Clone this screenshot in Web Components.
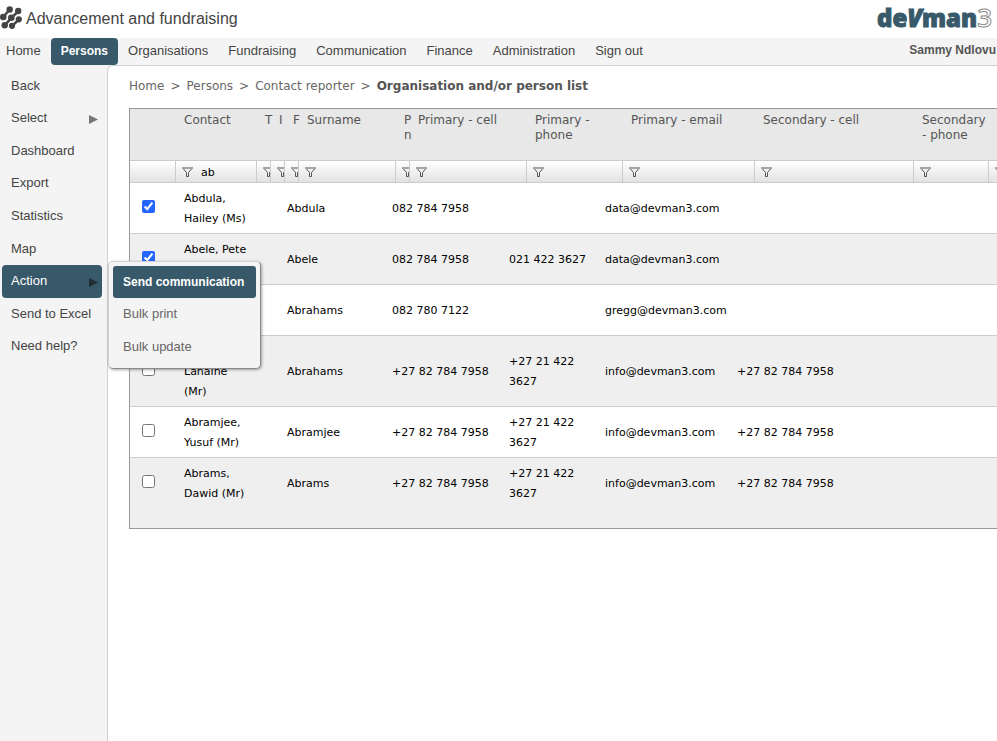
<!DOCTYPE html>
<html lang="en">
<head>
<meta charset="utf-8">
<title>Advancement and fundraising</title>
<style>
  body {
    margin: 0; min-height: 100vh; overflow: hidden;
    display: flex; flex-direction: column;
    font: 13px/16px "Liberation Sans", Arial, sans-serif;
    color: #444; background: #fff;
    --brand: #38596a; --panel: #f4f4f4; --line: #d0d0d0;
    --table-font: "DejaVu Sans", Verdana, sans-serif;
  }
  main-layout { flex: 1; }
</style>
</head>
<body>
<dm-banner>Advancement and fundraising</dm-banner>
<dm-nav>
  <dm-nav-item>Home</dm-nav-item>
  <dm-nav-item current>Persons</dm-nav-item>
  <dm-nav-item>Organisations</dm-nav-item>
  <dm-nav-item>Fundraising</dm-nav-item>
  <dm-nav-item>Communication</dm-nav-item>
  <dm-nav-item>Finance</dm-nav-item>
  <dm-nav-item>Administration</dm-nav-item>
  <dm-nav-item>Sign out</dm-nav-item>
  <span slot="user">Sammy Ndlovu</span>
</dm-nav>
<main-layout>
  <dm-menu slot="side">
    <dm-menu-item>Back</dm-menu-item>
    <dm-menu-item more>Select</dm-menu-item>
    <dm-menu-item>Dashboard</dm-menu-item>
    <dm-menu-item>Export</dm-menu-item>
    <dm-menu-item>Statistics</dm-menu-item>
    <dm-menu-item>Map</dm-menu-item>
    <dm-menu-item more current>Action
      <dm-popup slot="popup">
        <dm-popup-item current>Send communication</dm-popup-item>
        <dm-popup-item>Bulk print</dm-popup-item>
        <dm-popup-item>Bulk update</dm-popup-item>
      </dm-popup>
    </dm-menu-item>
    <dm-menu-item>Send to Excel</dm-menu-item>
    <dm-menu-item>Need help?</dm-menu-item>
  </dm-menu>
  <dm-breadcrumb></dm-breadcrumb>
  <dm-grid></dm-grid>
</main-layout>

<script>
const define = (name, html, setup) => customElements.define(name, class extends HTMLElement {
  constructor() {
    super();
    this.attachShadow({ mode: 'open' }).innerHTML = html;
  }
  connectedCallback() { if (setup) setup(this, this.shadowRoot); }
});

define('dm-banner', `
  <style>
    :host { display: flex; justify-content: space-between; align-items: center; height: 38px; overflow: hidden; }
    h1 { display: flex; align-items: center; gap: 4px; margin: 0; font: 16px/20px "Liberation Sans", Arial, sans-serif; }
    svg { display: block; margin-bottom: 2px; }
    a { padding: 0 5px 3px 0; color: var(--brand); text-decoration: none; font: 800 24px/32px "Open Sans", sans-serif; -webkit-text-stroke: 1px var(--brand); }
    i { font-style: italic; }
    .three { color: #fff; font-size: 26px; font-weight: 600; -webkit-text-stroke: 1px #8b8b8b; }
  </style>
  <h1>
    <svg width="22" height="24" viewBox="0 1 22 24" aria-hidden="true" fill="#444" stroke="#444">
      <path d="M9.700 4.500 3.200 12M18.200 6.300 11.300 12.800 4.700 20.300M19 14.300 12 21.200" fill="none" stroke-width="2.500"/>
      <g stroke="none"><circle cx="9.700" cy="4.500" r="3.200"/><circle cx="3.300" cy="12" r="3.300"/>
      <circle cx="18.200" cy="6" r="3.200"/><circle cx="11.300" cy="12.800" r="3.300"/><circle cx="4.700" cy="20.300" r="3.200"/>
      <circle cx="18.800" cy="14.300" r="3.100"/><circle cx="12" cy="20.800" r="3.100"/></g>
    </svg>
    <slot></slot>
  </h1>
  <a href="#" aria-label="devman3">de<i>V</i>man<span class="three">3</span></a>`);

define('dm-nav', `
  <style>
    :host { display: flex; justify-content: space-between; background: var(--panel); height: 28px; }
    nav { display: flex; gap: 2px; margin-left: -3px; }
    ::slotted([slot=user]) { font: bold 12px/24px "Liberation Sans", Arial, sans-serif; color: #555; white-space: nowrap; padding-right: 1px; }
  </style>
  <nav><slot></slot></nav><slot name="user"></slot>`);

define('dm-nav-item', `
  <style>
    :host { display: block; }
    :host([current]) { margin: 0 -1px; }
    a { display: block; padding: 0 9px; line-height: 26px; height: 27px; color: #444; text-decoration: none; white-space: nowrap; border-radius: 4px; }
    :host([current]) a { padding: 0 10px; background: var(--brand); color: #fff; font-weight: bold; font-size: 12px; }
  </style>
  <a href="#"><slot></slot></a>`);

define('main-layout', `
  <style>
    :host { display: flex; background: var(--panel); }
    aside { flex: none; width: 107px; }
    main { flex: 1; min-width: 0; margin-top: -1px; border: solid var(--line); border-width: 1px 0 0 1px; border-top-left-radius: 6px; background: #fff; padding: 12px 0 0 21px; }
  </style>
  <aside><slot name="side"></slot></aside>
  <main><slot></slot></main>`);

define('dm-menu', `
  <style>
    :host { display: grid; grid-auto-rows: 1fr; height: 293px; padding: 4px 5px 0 2px; }
  </style>
  <slot></slot>`);

define('dm-menu-item', `
  <style>
    :host { display: block; position: relative; }
    a { box-sizing: border-box; display: flex; justify-content: space-between; align-items: center; height: 100%; padding: 0 4px 1px 9px; color: #444; text-decoration: none; border-radius: 4px; white-space: nowrap; }
    svg { display: none; margin-top: 2px; }
    :host([more]) svg { display: block; }
    :host([current]) a { background: var(--brand); color: #fff; }
    :host([current]) path { fill: #222c33; }
    :host(:not([more])) a { padding-right: 0; }
  </style>
  <a href="#"><span><slot></slot></span><svg width="9" height="9" aria-hidden="true"><path d="M0 0 9 4.500 0 9Z" fill="#777"/></svg></a>
  <slot name="popup"></slot>`);

define('dm-popup', `
  <style>
    :host { position: absolute; z-index: 2; left: 106px; top: -4px; display: flex; flex-direction: column; box-sizing: border-box;
      padding: 4px; border: 1px solid #d2d2d2; border-right-color: #8a8a8a; border-bottom-color: #8a8a8a; border-radius: 5px;
      background: var(--panel); box-shadow: 1px 1px 3px #0005; }
  </style>
  <slot></slot>`);

define('dm-popup-item', `
  <style>
    :host { display: block; }
    a { display: block; padding: 0 12px 0 10px; line-height: 32px; color: #666; text-decoration: none; border-radius: 3px; white-space: nowrap; }
    :host(:last-child) a { padding-bottom: 1px; line-height: 33px; }
    :host([current]) a { background: var(--brand); color: #fff; font-weight: bold; font-size: 12px; line-height: 32px; }
  </style>
  <a href="#"><slot></slot></a>`);

define('dm-breadcrumb', `
  <style>
    :host { display: block; font: 12px/16px var(--table-font); color: #555; }
    nav { display: flex; gap: 6px; white-space: nowrap; }
    a, span { color: #666; text-decoration: none; }
  </style>
  <nav aria-label="Breadcrumb"><a href="#">Home</a><span>&gt;</span><a href="#">Persons</a><span>&gt;</span><a href="#">Contact reporter</a><span>&gt;</span><b>Organisation and/or person list</b></nav>`);

const FUNNEL = '<svg width="11" height="10" aria-hidden="true"><path d="M0 1H11M1.500 2 4.500 5.500V9.500H6.500V5.500L9.500 2" fill="none" stroke="#555"/></svg>';
const HEADS = [
  ['', 46], ['Contact', 81, 'ab'], ['T', 14], ['I', 14], ['F', 14], ['Surname', 97, ''], ['P n', 14],
  ['Primary - cell', 117, ''], ['Primary - phone', 96, ''], ['Primary - email', 132, ''],
  ['Secondary - cell', 159, ''], ['Secondary - phone', 75, ''], ['', 96, '']
];
const BODY_COLS = [46, 81, 22, 97, 8, 117, 96, 132, 159, 75, 122];
const ROWS = [
  [1, 'Abdula, Hailey (Ms)', 'Abdula', '082 784 7958', '', 'data@devman3.com', ''],
  [1, 'Abele, Pete (Mr)', 'Abele', '082 784 7958', '021 422 3627', 'data@devman3.com', ''],
  [0, 'Abrahams, Gregg (Mr)', 'Abrahams', '082 780 7122', '', 'gregg@devman3.com', ''],
  [0, 'Abrahams, Lanaine (Mr)', 'Abrahams', '+27 82 784 7958', '+27 21 422 3627', 'info@devman3.com', '+27 82 784 7958'],
  [0, 'Abramjee, Yusuf (Mr)', 'Abramjee', '+27 82 784 7958', '+27 21 422 3627', 'info@devman3.com', '+27 82 784 7958'],
  [0, 'Abrams, Dawid (Mr)', 'Abrams', '+27 82 784 7958', '+27 21 422 3627', 'info@devman3.com', '+27 82 784 7958']
];
const cols = widths => '<colgroup>' + widths.map(w => `<col style="width:${w}px">`).join('') + '</colgroup>';
const sum = widths => widths.reduce((a, b) => a + b, 0);

define('dm-grid', `
  <style>
    :host { display: block; margin-top: 14px; overflow: hidden; border: 1px solid #999; border-right: 0; padding-bottom: 20px; background: #efefef; font: 11px/20px var(--table-font); color: #000; }
    table { table-layout: fixed; border-collapse: separate; border-spacing: 0; }
    .heads { background: #e8e8e8; }
    th { box-sizing: border-box; height: 51px; padding: 4px 0 0 8px; vertical-align: top; text-align: left; font-weight: normal; font-size: 12px; line-height: 15px; color: #555; }
    .filter td { box-sizing: border-box; height: 23px; padding: 0; overflow: hidden; background: linear-gradient(#fff, #e2e2e2); border: solid #ccc; border-width: 1px 1px 1px 0; }
    .filter div { display: flex; align-items: center; gap: 8px; padding-left: 6px; overflow: hidden; }
    button { flex: none; padding: 0; border: 0; background: none; }
    svg { display: block; }
    input[type=text] { min-width: 0; width: 100%; height: 20px; box-sizing: border-box; border: 0; padding: 2px 0 0; outline: 0; background: none; font: inherit; color: #000; }
    .rows td { padding: 6px 8px 4px; border-bottom: 1px solid #ccc; background: #fff; vertical-align: middle; }
    .rows tr:nth-child(even) td { background: #efefef; }
    .rows tr:last-child td { border-bottom: 0; }
    .rows td.narrow { padding: 0; }
    .rows td.nw { white-space: nowrap; }
    .rows td.check { padding: 0 0 0 12px; }
    input[type=checkbox] { display: block; width: 13px; height: 13px; margin: 0 0 3px; accent-color: #2466ff; }
  </style>
  <table class="heads"></table>
  <table class="rows"></table>`,
(host, root) => {
  const heads = root.querySelector('.heads'), rows = root.querySelector('.rows');
  const widths = HEADS.map(h => h[1]);
  heads.style.width = sum(widths) + 'px';
  rows.style.width = sum(BODY_COLS) + 'px';
  heads.innerHTML = cols(widths) + '<thead><tr>' + HEADS.map(h => `<th scope="col">${h[0]}</th>`).join('') +
    '</tr><tr class="filter">' + HEADS.map(([label, w, value], i) => i === 0 ? '<td></td>' :
      `<td><div><button type="button" aria-label="Filter ${label}">${FUNNEL}</button>${value === undefined ? '' :
      `<input type="text" aria-label="${label} filter" value="${value}">`}</div></td>`).join('') + '</tr></thead>';
  rows.innerHTML = cols(BODY_COLS) + '<tbody>' + ROWS.map(r =>
    `<tr><td class="check"><input type="checkbox" aria-label="Select ${r[1]}" ${r[0] ? 'checked' : ''}></td>` +
    `<td>${r[1]}</td><td class="narrow"></td><td>${r[2]}</td><td class="narrow"></td>` +
    `<td class="nw">${r[3]}</td><td>${r[4]}</td><td class="nw">${r[5]}</td><td class="nw">${r[6]}</td><td></td><td></td></tr>`
  ).join('') + '</tbody>';
});
</script>
</body>
</html>
